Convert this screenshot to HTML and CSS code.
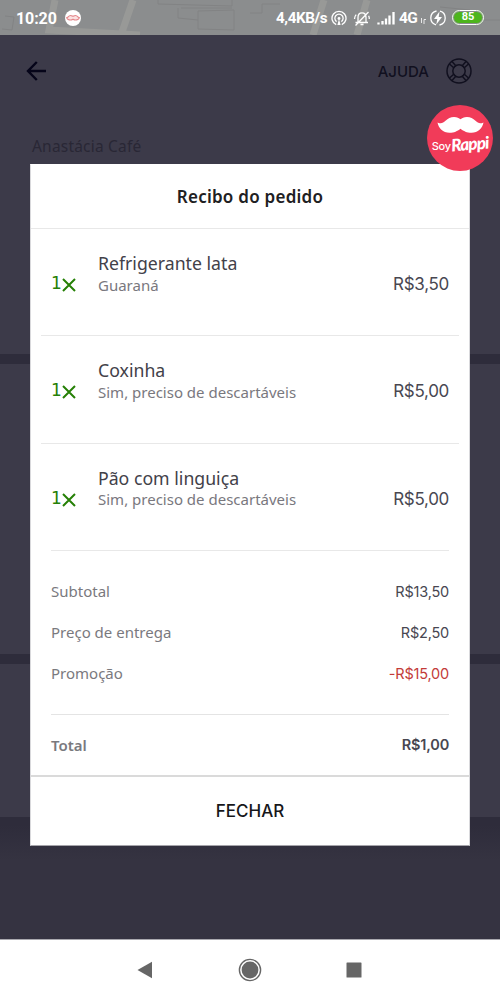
FILE: index.html
```html
<!DOCTYPE html>
<html lang="pt-BR">
<head>
<meta charset="utf-8">
<title>Recibo do pedido</title>
<link rel="stylesheet" href="styles.css">
</head>
<body>
<div class="phone">
  <header class="status">
    <svg class="status-map" width="500" height="35" viewBox="0 0 500 35" fill="none">
      <path d="M55 0 49 30 140 35M133 0 121 35M324 0 313 35M367 0 357 35" stroke="#989997" stroke-width="7"/>
      <path d="M158 0V4L232 6V0M181 8H232M178 8V18L198 20V29L234 30V10L198 11V20M5 16 14 17 12 30 2 29M440 7 470 10V20H500M250 13H262V4H280" stroke="#828384" stroke-width="1"/>
    </svg>
    <span class="clock">10:20</span>
    <svg class="mini-logo" width="16" height="16" viewBox="0 0 16 16">
      <circle cx="8" cy="8" r="8" fill="#fff"/>
      <path d="M1.7 7.8C3 8.2 3.2 5.5 5.6 5.5 7 5.5 7.2 6.2 8 6.2s1-.7 2.4-.7c2.4 0 2.6 2.7 3.9 2.3-.6 2-3.8 3-6.3 1.4C5.5 10.8 2.3 9.8 1.7 7.8Z" fill="#fbe3e3" stroke="#e4878b" stroke-width="1.2"/>
    </svg>
    <span class="speed">4,4KB/s</span>
    <svg class="status-icons" width="66" height="18" viewBox="0 0 66 18" fill="none" stroke="#fff" stroke-width="1.3">
      <path d="M5.2 15.7A7 7 0 1 1 10.8 15.7M5.6 12.600A4.100 4.100 0 1 1 10.400 12.600"/>
      <path d="M8 10 9.600 16H6.400Z" fill="#fff" stroke="none"/><circle cx="8" cy="9.500" r="1.400" fill="#fff" stroke="none"/>
      <path d="M24.500 13.500h12.500M27 13V8.500c0-3 1.700-4.600 4-4.600s4 1.600 4 4.600V13M29.500 15.500h3M24.500 16.500 37.500 3M23.500 10c0-2 .5-3.200 1.700-4.400M38.300 10c0-1.700-.2-2.300-.7-3.200"/>
      <path d="M47.500 13.500v2M51.500 12v3.500M55 9.500v6M58.500 6.500v9M62.500 3v12.500" stroke-width="2.300"/>
    </svg>
    <span class="net">4G</span>
    <svg class="data" width="6" height="6" viewBox="0 0 6 6" fill="none" stroke="#fff" stroke-width="1"><path d="M1.500 0V5M4 6V1.500M4 1.500H6" opacity=".8"/></svg>
    <svg class="bolt" width="16" height="16" viewBox="0 0 16 16" fill="none" stroke="#fff" stroke-width="1.300"><path d="M6.500 1A7.100 7.100 0 0 0 6 14.800M9.500 15A7.100 7.100 0 0 0 10 1.200"/><path d="M9.500 1.500 4 9H7.300L6.300 14.500 12 6.900H8.700Z" fill="#fff" stroke="none"/></svg>
    <span class="battery">85</span>
  </header>

  <main class="app">
    <div class="topbar">
      <svg width="21" height="20" viewBox="0 0 21 20" fill="none" stroke="#050419" stroke-width="2.400"><path d="M20 10H2M10.800 1 2 10 10.800 19"/></svg>
      <span class="help">AJUDA</span>
      <svg width="26" height="26" viewBox="0 0 26 26" fill="none" stroke="#11101f" stroke-width="1.500">
        <circle cx="13" cy="13" r="12"/><circle cx="13" cy="13" r="6.200"/>
        <path d="M3.500 6 8 10M6 3.500 10 8M22.500 6 18 10M20 3.500 16 8M3.500 20 8 16M6 22.500 10 18M22.500 20 18 16M20 22.500 16 18"/>
      </svg>
    </div>
    <section class="card store">Anastácia Café</section>
    <section class="card middle"></section>
    <section class="card last"></section>

    <div class="dialog" role="dialog">
      <h1 class="title">Recibo do pedido</h1>
      <ul class="items">
        <li class="item"><span class="qty">1<svg width="14" height="14" viewBox="0 0 14 14"><path d="M1 1 13 13M13 1 1 13"/></svg></span><div class="info"><div class="name">Refrigerante lata</div><div class="note">Guaraná</div></div><span class="price">R$3,50</span></li>
        <li class="item"><span class="qty">1<svg width="14" height="14" viewBox="0 0 14 14"><path d="M1 1 13 13M13 1 1 13"/></svg></span><div class="info"><div class="name">Coxinha</div><div class="note">Sim, preciso de descartáveis</div></div><span class="price">R$5,00</span></li>
        <li class="item"><span class="qty">1<svg width="14" height="14" viewBox="0 0 14 14"><path d="M1 1 13 13M13 1 1 13"/></svg></span><div class="info"><div class="name">Pão com linguiça</div><div class="note">Sim, preciso de descartáveis</div></div><span class="price">R$5,00</span></li>
      </ul>
      <div class="sums">
        <div class="line"><span>Subtotal</span><span class="amount">R$13,50</span></div>
        <div class="line"><span>Preço de entrega</span><span class="amount">R$2,50</span></div>
        <div class="line"><span>Promoção</span><span class="amount discount">-R$15,00</span></div>
      </div>
      <div class="total"><span>Total</span><span class="amount">R$1,00</span></div>
      <button class="close">FECHAR</button>
    </div>
  </main>

  <nav class="nav">
    <svg width="16" height="18" viewBox="0 0 16 18"><path d="M.5 9 15 .8V17.200Z" fill="#666"/></svg>
    <svg width="24" height="24" viewBox="0 0 24 24"><circle cx="12" cy="12" r="10.600" fill="none" stroke="#666" stroke-width="1.400"/><circle cx="12" cy="12" r="8.400" fill="#666"/></svg>
    <svg width="16" height="16" viewBox="0 0 16 16"><rect x=".5" y=".5" width="15" height="15" rx=".6" fill="#666"/></svg>
  </nav>

  <div class="badge">
    <svg class="moustache" width="47" height="17" viewBox="0 0 47 17"><path d="M.5 5.500C4 7.200 6 6.200 8.500 3.800 11 1.400 13.500 0 17 0c3.200 0 5 1 6.500 2.300C25 1 26.800 0 30 0c3.500 0 6 1.400 8.500 3.800 2.500 2.400 4.500 3.400 8 1.700C45.500 11 41 15.800 34.500 15.800c-5 0-7.500-1.500-11-4-3.500 2.500-6 4-11 4C6 15.800 1.500 11 .5 5.500Z" fill="#fff"/></svg>
    <div class="brand"><span class="soy">Soy</span><span class="rappi">Rappi</span></div>
  </div>
</div>
</body>
</html>
```
FILE: styles.css
```css
* { box-sizing: border-box; }
body { margin: 0; font-family: "Noto Sans", sans-serif; }
svg { display: block; flex: none; }
.phone { position: relative; display: flex; flex-direction: column; width: 500px; height: 1000px; overflow: hidden; background: #fff; }

.status { position: relative; display: flex; align-items: center; height: 35px; padding: 0 16px; background: #8b8d8e; color: #fff; font-family: Roboto, sans-serif; font-weight: 700; white-space: nowrap; }
.status > * { position: relative; }
.status .status-map { position: absolute; left: 0; top: 0; }
.clock { width: 49px; padding-top: 1px; font-size: 16px; letter-spacing: -0.1px; }
.speed { margin-left: auto; width: 55px; padding-top: 1px; font-size: 15.2px; letter-spacing: -0.4px; }
.net { width: 20px; margin-left: 2px; padding-top: 1px; font-size: 15.5px; letter-spacing: -0.6px; }
.data { margin: 7px 4px 0 1px; }
.bolt { margin-right: 6px; }
.battery { width: 32px; height: 15px; border: 1.5px solid #fff; border-radius: 8px; background: #4db51c; font-size: 11px; line-height: 12px; text-align: center; box-shadow: inset 0 0 0 1px #8b8d8e; }

.app { position: relative; height: 904px; display: flex; flex-direction: column; background: linear-gradient(#2e2c3b 0 790px, #353341 825px); }
.topbar { display: flex; align-items: center; height: 72px; padding: 0 28px 0 26px; background: #3c3a49; }
.help { margin-left: auto; margin-right: 17px; font: 500 15px Inter, sans-serif; color: #11101f; }
.card { background: #3c3a49; margin-bottom: 10px; }
.store { height: 247px; padding: 28px 32px; font-size: 15.5px; line-height: 22px; letter-spacing: 0.2px; color: #292735; }
.middle { height: 290px; }
.last { height: 153px; margin-bottom: 0; }

.dialog { position: absolute; left: 30px; right: 30px; top: 129px; height: 682px; display: flex; flex-direction: column; border: 1px solid #d9d9dc; border-top-color: #fff; border-bottom-color: #a5a4aa; background: #fff; }
.title { margin: 0; height: 64px; border-bottom: 1px solid #e8e8e8; font-size: 17px; font-weight: 600; line-height: 64px; letter-spacing: 0.25px; text-align: center; color: #202022; }
.items { margin: 0; padding: 0 10px; list-style: none; }
.item { display: flex; height: 107.4px; padding: 22px 10px 0; border-bottom: 1px solid #e8e8e8; }
.item:last-child { margin: 0 10px; padding: 22px 0 0; }
.qty { display: flex; width: 47px; padding-top: 21px; font-family: "DejaVu Sans", sans-serif; font-size: 17px; line-height: 23px; color: #268006; }
.qty svg { margin-top: 6px; fill: none; stroke: #268006; stroke-width: 2; }
.name { font-size: 17.7px; line-height: 24.5px; color: #424149; }
.note { font-size: 15px; line-height: 18px; color: #79787e; }
.price { margin-left: auto; padding-top: 22px; font-family: Inter, sans-serif; font-size: 17px; line-height: 23px; letter-spacing: -0.3px; color: #484751; }
.sums { margin: 0 20px; padding-top: 19px; height: 164px; border-bottom: 1px solid #e4e4e4; }
.line, .total { display: flex; justify-content: space-between; align-items: center; font-size: 15px; color: #7a797e; }
.line { height: 41px; }
.amount { font-family: Inter, sans-serif; font-size: 14.5px; letter-spacing: -0.2px; color: #484751; }
.line .amount { padding-top: 1px; }
.discount { color: #c33b39; }
.total { height: 60px; margin: 0 20px; padding-bottom: 1px; font-weight: 600; }
.total .amount { font-weight: 600; }
.close { flex: 1; border: 0; border-top: 2px solid #dadada; padding: 0; background: #fff; font: 500 17px Inter, sans-serif; color: #17171a; }

.nav { display: flex; height: 61px; padding: 0 138px 1px 137px; align-items: center; justify-content: space-between; background: #fff; border-top: 1px solid #aaa9af; }
.badge { position: absolute; left: 427px; top: 105px; width: 66px; height: 66px; border-radius: 50%; background: #f13b59; color: #fff; display: flex; flex-direction: column; align-items: center; padding-top: 12px; }
.brand { display: flex; align-items: baseline; margin-top: -1px; line-height: 20px; white-space: nowrap; }
.soy { font: 500 11px Inter, sans-serif; letter-spacing: -0.3px; }
.rappi { font: italic 900 17px Lato, sans-serif; letter-spacing: -0.8px; transform: rotate(-5deg); }
```
